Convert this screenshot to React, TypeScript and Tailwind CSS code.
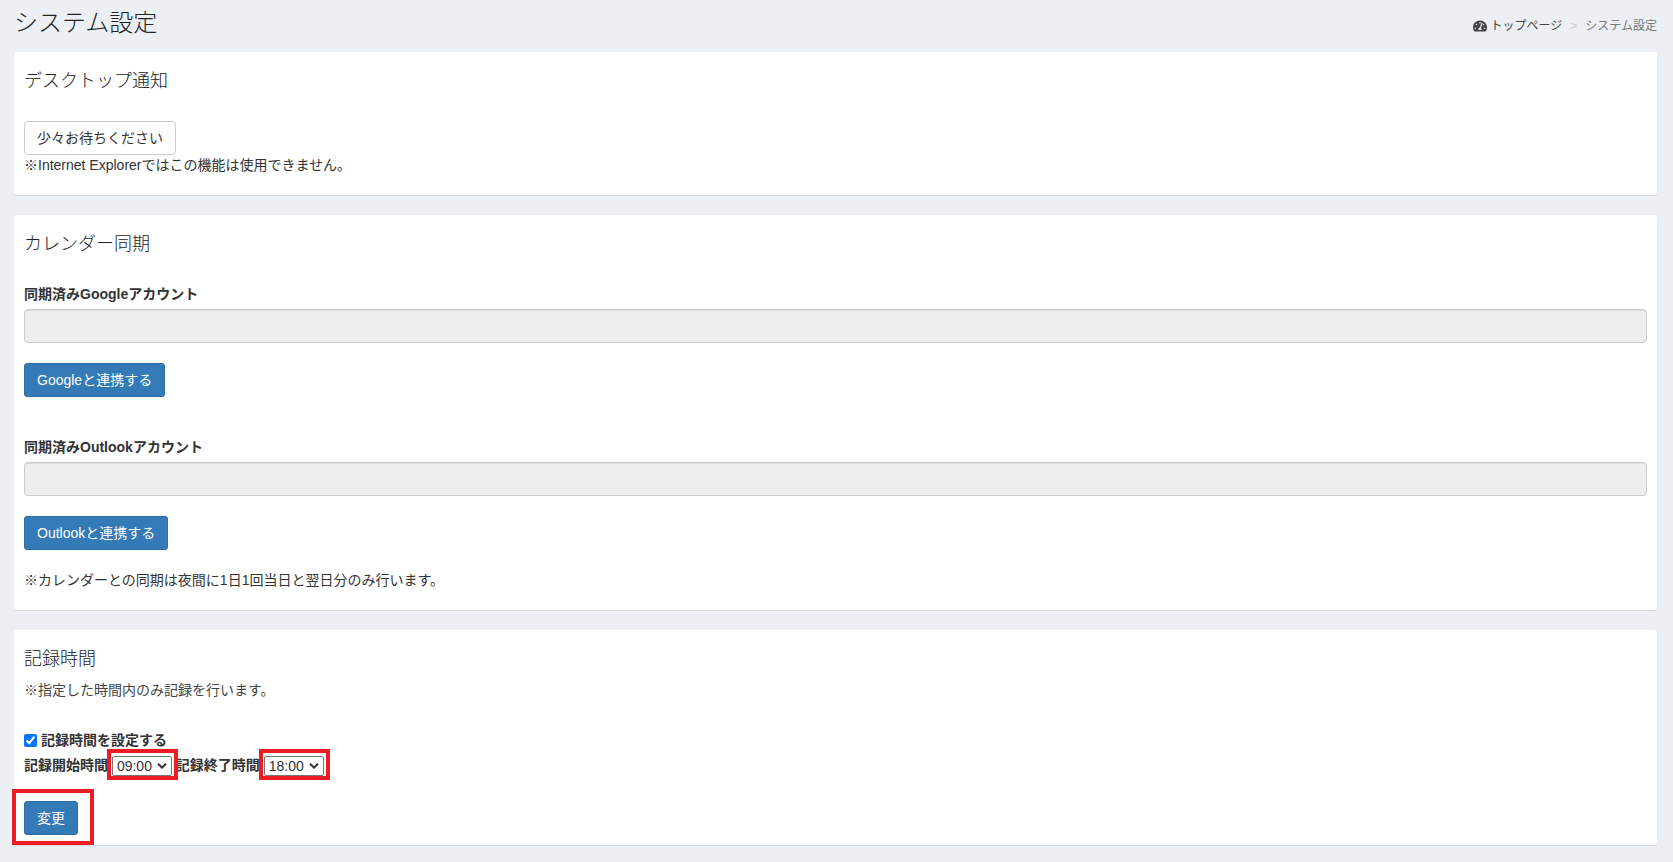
import { FormEvent, ReactNode, useState } from 'react';
import { FaTachometerAlt } from 'react-icons/fa';

const HOURS = Array.from({ length: 24 }, (_, i) => `${String(i).padStart(2, '0')}:00`);

const primaryButton =
  'h-[34px] rounded-[3px] border border-[#2e6da4] bg-[#337ab7] px-3 text-sm text-white hover:bg-[#286090]';

function Box({ title, note, children }: { title: string; note?: string; children: ReactNode }) {
  return (
    <section className="rounded-[3px] bg-white shadow-[0_1px_1px_rgba(0,0,0,0.1)]">
      <header className="px-[10px] pt-[19px] pb-[9px]">
        <h2 className="text-lg leading-5 font-light text-[#222]">{title}</h2>
        {note && <p className="pt-[11px] text-sm leading-5 text-[#444]">{note}</p>}
      </header>
      <div className="p-[10px]">{children}</div>
    </section>
  );
}

function SyncAccount({ id, service }: { id: string; service: string }) {
  return (
    <div>
      <label htmlFor={id} className="mb-[5px] block text-sm leading-5 font-bold">
        同期済み{service}アカウント
      </label>
      <input
        id={id}
        type="text"
        readOnly
        className="mb-5 block h-[34px] w-full rounded-[4px] border border-[#ccc] bg-[#eee] px-3 text-sm shadow-[inset_0_1px_1px_rgba(0,0,0,0.075)]"
      />
      <button type="button" className={primaryButton}>
        {service}と連携する
      </button>
    </div>
  );
}

function HourSelect({ id, value, onChange }: { id: string; value: string; onChange: (v: string) => void }) {
  return (
    <span className="relative inline-block h-5 w-[60px] align-middle">
      <select
        id={id}
        value={value}
        onChange={(e) => onChange(e.target.value)}
        className="block h-5 w-full appearance-none rounded-[2px] border border-[#767676] bg-white pl-1 text-sm leading-[18px]"
      >
        {HOURS.map((h) => (
          <option key={h}>{h}</option>
        ))}
      </select>
      <svg
        viewBox="0 0 10 6"
        className="pointer-events-none absolute top-[7px] right-[5px] h-[6px] w-[10px]"
        fill="none"
        stroke="#333"
        strokeWidth="2"
      >
        <path d="M1 0.8 5 4.6 9 0.8" />
      </svg>
      <span className="pointer-events-none absolute -top-[7px] -right-[6px] -bottom-1 -left-[5px] border-4 border-[#ed1c24]" />
    </span>
  );
}

export default function App() {
  const [enabled, setEnabled] = useState(true);
  const [start, setStart] = useState('09:00');
  const [end, setEnd] = useState('18:00');

  function handleSubmit(e: FormEvent<HTMLFormElement>) {
    e.preventDefault();
  }

  return (
    <main className="min-h-screen bg-[#ecf0f5] pr-4 pl-[14px] pb-4 font-['Liberation_Sans','Noto_Sans_CJK_JP',sans-serif] text-sm leading-5 text-[#333]">
      <div className="flex h-[52px] items-start justify-between">
        <h1 className="pt-[10px] text-2xl leading-[26px] font-light text-[#222]">システム設定</h1>
        <nav className="pt-4 text-xs leading-5">
          <ol className="flex items-center">
            <li>
              <a href="#" className="flex items-center gap-1 text-[#444]">
                <FaTachometerAlt className="h-[14px] w-[14px]" />
                トップページ
              </a>
            </li>
            <li className="px-2 text-[#ccc]">&gt;</li>
            <li className="text-[#777]">システム設定</li>
          </ol>
        </nav>
      </div>

      <div className="flex flex-col gap-5">
        <Box title="デスクトップ通知">
          <div className="pt-[11px] pb-[10px]">
            <button type="button" className="block h-[34px] rounded-[4px] border border-[#ccc] bg-white px-3 text-sm">
              少々お待ちください
            </button>
            <p>※Internet Explorerではこの機能は使用できません。</p>
          </div>
        </Box>

        <Box title="カレンダー同期">
          <div className="flex flex-col gap-10 pt-[11px]">
            <SyncAccount id="google-account" service="Google" />
            <SyncAccount id="outlook-account" service="Outlook" />
          </div>
          <p className="pt-5 pb-[10px]">※カレンダーとの同期は夜間に1日1回当日と翌日分のみ行います。</p>
        </Box>

        <Box title="記録時間" note="※指定した時間内のみ記録を行います。">
          <form onSubmit={handleSubmit} className="pt-[11px]">
            <label className="flex items-center gap-1 font-bold">
              <input
                type="checkbox"
                checked={enabled}
                onChange={(e) => setEnabled(e.target.checked)}
                className="h-[13px] w-[13px]"
              />
              記録時間を設定する
            </label>
            <div className="mt-[5px] mb-[25px] leading-5">
              <label htmlFor="start-time" className="font-bold">
                記録開始時間
              </label>{' '}
              <HourSelect id="start-time" value={start} onChange={setStart} />{' '}
              <label htmlFor="end-time" className="font-bold">
                記録終了時間
              </label>{' '}
              <HourSelect id="end-time" value={end} onChange={setEnd} />
            </div>
            <div className="relative w-fit">
              <button type="submit" className={primaryButton}>
                変更
              </button>
              <span className="pointer-events-none absolute -top-3 -right-4 -bottom-[10px] -left-3 border-4 border-[#ed1c24]" />
            </div>
          </form>
        </Box>
      </div>
    </main>
  );
}
